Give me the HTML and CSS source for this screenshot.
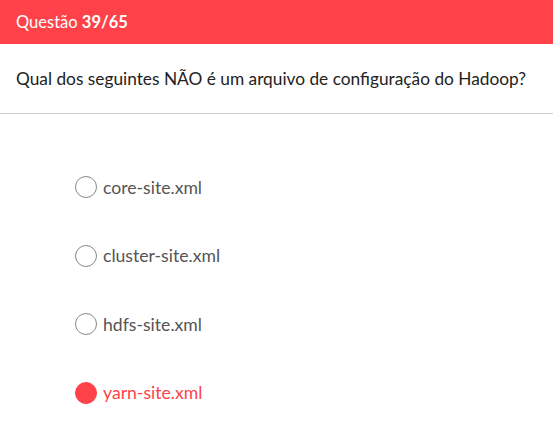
FILE: index.html
```html
<!DOCTYPE html>
<html lang="pt">
<head>
<meta charset="utf-8">
<link rel="stylesheet" href="styles.css">
</head>
<body>
<header class="topbar">Questão <b>39/65</b></header>
<div class="question">Qual dos seguintes NÃO é um arquivo de configuração do Hadoop?</div>
<ul class="options">
  <li class="option"><span class="radio"></span><span class="label">core-site.xml</span></li>
  <li class="option"><span class="radio"></span><span class="label">cluster-site.xml</span></li>
  <li class="option"><span class="radio"></span><span class="label">hdfs-site.xml</span></li>
  <li class="option selected"><span class="radio"></span><span class="label">yarn-site.xml</span></li>
</ul>
</body>
</html>
```
FILE: styles.css
```css
html, body {
  margin: 0;
  padding: 0;
  background: #fff;
  font-family: Lato, "Open Sans", sans-serif;
}
.topbar {
  height: 44px;
  background: #ff4249;
  color: #fff;
  font-size: 16.5px;
  line-height: 44px;
  padding-left: 16px;
}
.topbar b { font-weight: 700; }
.question {
  height: 70px;
  box-sizing: border-box;
  border-bottom: 1px solid #cfcfcf;
  display: flex;
  align-items: center;
  padding-left: 16px;
  font-size: 17.3px;
  color: #222;
}
.options {
  list-style: none;
  margin: 0;
  padding: 62px 0 0 75px;
  display: flex;
  flex-direction: column;
  gap: 46px;
}
.option {
  display: flex;
  align-items: center;
  gap: 6px;
  height: 22.5px;
  font-size: 17.6px;
  color: #555;
}
.radio {
  width: 22px;
  height: 22px;
  box-sizing: border-box;
  border: 1px solid #888;
  border-radius: 50%;
}
.selected { color: #ff4249; }
.selected .radio { background: #ff4249; border-color: #ff4249; }
```
